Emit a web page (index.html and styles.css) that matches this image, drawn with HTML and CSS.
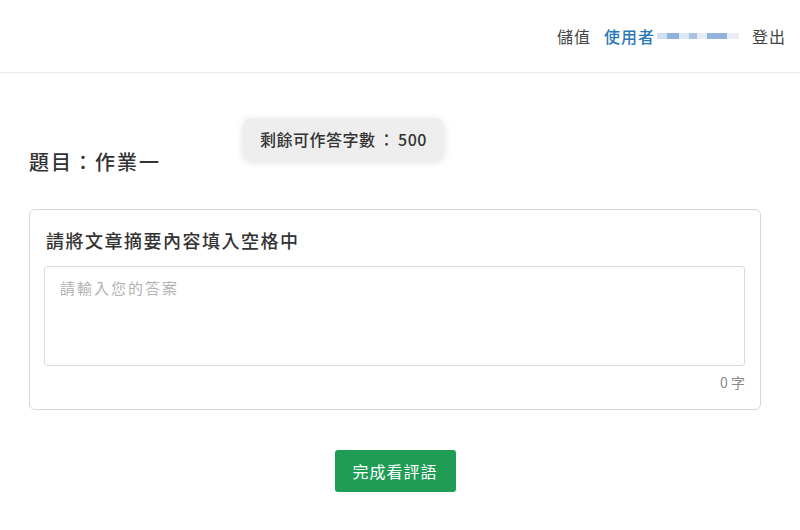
FILE: index.html
```html
<!DOCTYPE html>
<html lang="zh-Hant">
<head>
    <meta charset="UTF-8">
    <title>作業一</title>
    <link rel="stylesheet" href="styles.css">
</head>
<body>
    <header class="topbar">
        <nav class="nav">
            <a class="nav-link" href="#">儲值</a>
            <a class="nav-link user" href="#">使用者<span class="blur-name">
                <i class="px p1"></i><i class="px p2"></i><i class="px p3"></i><i class="px p4"></i><i class="px p5"></i><i class="px p6"></i><i class="px p7"></i>
            </span></a>
            <a class="nav-link" href="#">登出</a>
        </nav>
    </header>

    <main class="content">
        <div class="counter">剩餘可作答字數<span class="colon">：</span>500</div>
        <h2 class="title">題目：作業一</h2>

        <section class="card">
            <h3 class="card-title">請將文章摘要內容填入空格中</h3>
            <textarea class="answer" placeholder="請輸入您的答案"></textarea>
            <div class="count">0 字</div>
        </section>

        <div class="actions">
            <button class="submit">完成看評語</button>
        </div>
    </main>
</body>
</html>
```

FILE: styles.css
```css
body {
    margin: 0;
    font-family: "Noto Sans CJK TC", "Noto Sans", sans-serif;
    background-color: #fff;
    color: #333;
    text-spacing-trim: space-all;
}

.topbar {
    height: 72px;
    border-bottom: 1px solid #eaeaea;
    box-shadow: 0 1px 2px rgba(0, 0, 0, 0.03);
    display: flex;
    justify-content: flex-end;
    align-items: center;
    padding-right: 14px;
}

.nav {
    display: flex;
    align-items: center;
    gap: 13px;
    font-size: 16px;
    letter-spacing: 1px;
}

.nav-link {
    color: #444;
    text-decoration: none;
}

.nav-link.user {
    color: #2a78b8;
    font-weight: 500;
    display: flex;
    align-items: center;
}

.blur-name {
    display: inline-flex;
    align-items: center;
    height: 14px;
    margin-left: 2px;
}

.px {
    display: inline-block;
    height: 6px;
}

.p1 { width: 10px; background: #cfe0f3; }
.p2 { width: 12px; background: #8fb3db; }
.p3 { width: 10px; background: #dbe7f4; }
.p4 { width: 8px;  background: #a9c4e3; }
.p5 { width: 10px; background: #e4edf7; }
.p6 { width: 20px; background: #93b4da; }
.p7 { width: 12px; background: #e8eef6; }

.content {
    position: relative;
    padding: 75px 39px 0 29px;
}

.counter {
    position: absolute;
    left: 243px;
    top: 45px;
    width: 201px;
    height: 42px;
    line-height: 42px;
    text-align: center;
    background-color: #eeeeee;
    border-radius: 8px;
    box-shadow: 0 2px 8px rgba(0, 0, 0, 0.12);
    font-size: 16px;
    font-weight: 500;
    letter-spacing: 0.5px;
    color: #333;
}

.colon {
    margin: 0 3px;
}

.title {
    margin: 0 0 33px;
    font-size: 20px;
    letter-spacing: 2px;
    font-weight: 500;
    line-height: 28px;
    color: #333;
}

.card {
    border: 1px solid #d6d6d6;
    border-radius: 6px;
    padding: 16px 15px 15px 14px;
}

.card-title {
    margin: 0 0 12px 2px;
    font-size: 18px;
    letter-spacing: 1.5px;
    font-weight: 500;
    line-height: 28px;
    color: #333;
}

.answer {
    display: block;
    width: 100%;
    height: 100px;
    box-sizing: border-box;
    border: 1px solid #dcdcdc;
    border-radius: 3px;
    padding: 10px 15px;
    font-family: inherit;
    font-size: 15px;
    letter-spacing: 2px;
    resize: none;
}

.answer::placeholder {
    color: #b3b3b3;
}

.count {
    text-align: right;
    margin-top: 4px;
    font-size: 14px;
    color: #888;
    line-height: 24px;
}

.actions {
    display: flex;
    justify-content: center;
    margin-top: 40px;
}

.submit {
    background-color: #1f9d55;
    color: #fff;
    border: none;
    border-radius: 3px;
    width: 121px;
    height: 42px;
    font-family: inherit;
    font-size: 16px;
    letter-spacing: 1px;
    cursor: pointer;
}
```
